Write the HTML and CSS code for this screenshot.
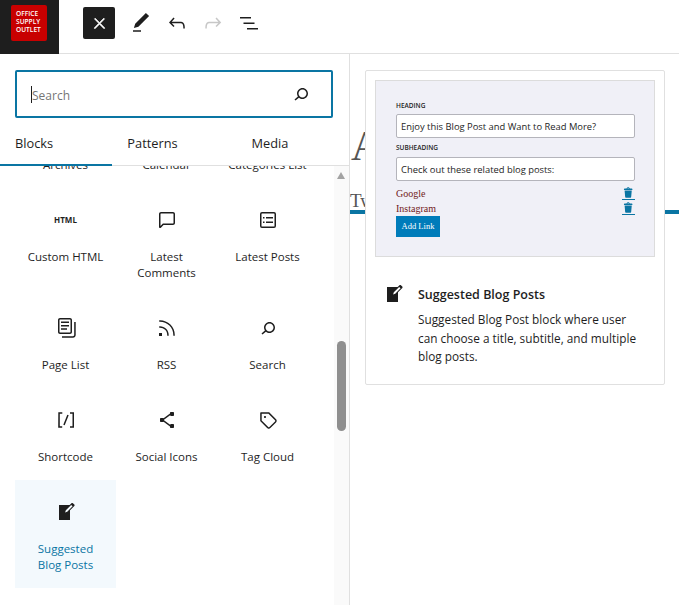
FILE: index.html
```html
<!DOCTYPE html>
<html lang="en">
<head>
    <meta charset="UTF-8">
    <title>Add block</title>
    <meta name="viewport" content="width=device-width, initial-scale=1.0">
    <link rel="stylesheet" href="styles.css">
</head>
<body>
    <div class="topbar">
        <div class="logo"><div class="logo-mark">OFFICE<br>SUPPLY<br>OUTLET</div></div>
        <div class="tools">
            <button class="tool close"><svg viewBox="0 0 24 24" width="24" height="24"><path d="M13 11.8l6.1-6.3-1-1-6.1 6.2-6.1-6.2-1 1 6.1 6.3-6.5 6.7 1 1 6.5-6.6 6.5 6.6 1-1z"/></svg></button>
            <button class="tool"><svg viewBox="0 0 24 24" width="24" height="24"><path d="M20.1 5.1L16.9 2 6.2 12.7l-1.3 4.4 4.5-1.3L20.1 5.1zM4 20.8h8v-1.5H4v1.5z"/></svg></button>
            <button class="tool"><svg viewBox="0 0 24 24" width="24" height="24"><path d="M18.3 11.7c-.6-.6-1.4-.9-2.3-.9H6.7l2.9-3.3-1.1-1-4.5 5L8.5 16l1-1-2.7-2.7H16c.5 0 .9.2 1.3.5 1 1 1 3.4 1 4.5v.3h1.5v-.2c0-1.5 0-4.3-1.5-5.7z"/></svg></button>
            <button class="tool off"><svg viewBox="0 0 24 24" width="24" height="24"><path d="M15.6 6.5l-1.1 1 2.9 3.3H8c-.9 0-1.7.3-2.3.9-1.4 1.5-1.4 4.2-1.4 5.6v.2h1.5v-.3c0-1.1 0-3.5 1-4.5.3-.3.7-.5 1.3-.5h9.2L14.5 15l1.1 1.1 4.6-4.6-4.6-5z"/></svg></button>
            <button class="tool"><svg viewBox="0 0 24 24" width="24" height="24"><path d="M3 6h11v1.5H3V6zm3.5 5.5h11V13h-11v-1.5zM21 17H10v1.5h11V17z"/></svg></button>
        </div>
    </div>

    <div class="main">
        <div class="inserter">
            <div class="search">
                <span class="caret"></span><span class="search-text">Search</span>
                <svg viewBox="0 0 24 24" width="24" height="24"><path d="M13.5 6C10.5 6 8 8.5 8 11.5c0 1.1.3 2.1.9 3l-3.4 3 1 1.1 3.4-2.9c1 .9 2.2 1.4 3.6 1.4 3 0 5.5-2.5 5.5-5.5C19 8.5 16.5 6 13.5 6zm0 9.5c-2.2 0-4-1.8-4-4s1.8-4 4-4 4 1.8 4 4-1.8 4-4 4z"/></svg>
            </div>
            <div class="tabs">
                <div class="tab active">Blocks</div>
                <div class="tab">Patterns</div>
                <div class="tab">Media</div>
            </div>
            <div class="scroller">
                <div class="blocks">
                    <div class="block"><div class="block-icon"></div><div class="block-name">Archives</div></div>
                    <div class="block"><div class="block-icon"></div><div class="block-name">Calendar</div></div>
                    <div class="block"><div class="block-icon"></div><div class="block-name">Categories List</div></div>

                    <div class="block"><div class="block-icon"><span class="html-icon">HTML</span></div><div class="block-name">Custom HTML</div></div>
                    <div class="block"><div class="block-icon"><svg viewBox="0 0 24 24" width="24" height="24"><path d="M18 4H6c-1.1 0-2 .9-2 2v12.9c0 .6.5 1.1 1.1 1.1.3 0 .5-.1.8-.3L8.5 17H18c1.1 0 2-.9 2-2V6c0-1.1-.9-2-2-2zm.5 11c0 .3-.2.5-.5.5H7.9l-2.4 2.4V6c0-.3.2-.5.5-.5h12c.3 0 .5.2.5.5v9z"/></svg></div><div class="block-name">Latest Comments</div></div>
                    <div class="block"><div class="block-icon"><svg viewBox="0 0 24 24" width="24" height="24"><path d="M18 5.5H6a.5.5 0 00-.5.5v12a.5.5 0 00.5.5h12a.5.5 0 00.5-.5V6a.5.5 0 00-.5-.5zM6 4h12a2 2 0 012 2v12a2 2 0 01-2 2H6a2 2 0 01-2-2V6a2 2 0 012-2zm1 5h1.5v1.5H7V9zm1.5 4.5H7V15h1.5v-1.5zM10 9h7v1.5h-7V9zm7 4.5h-7V15h7v-1.5z"/></svg></div><div class="block-name">Latest Posts</div></div>

                    <div class="block"><div class="block-icon"><svg viewBox="0 0 24 24" width="24" height="24"><path d="M7 13.8h6v-1.5H7v1.5zM18 16V4c0-1.1-.9-2-2-2H6c-1.1 0-2 .9-2 2v12c0 1.1.9 2 2 2h10c1.1 0 2-.9 2-2zM5.5 16V4c0-.3.2-.5.5-.5h10c.3 0 .5.2.5.5v12c0 .3-.2.5-.5.5H6c-.3 0-.5-.2-.5-.5zM7 10.5h8V9H7v1.5zm0-3.5h8V5.5H7V7zM20.2 6v13c0 .7-.6 1.2-1.2 1.2H8v1.5h11c1.5 0 2.7-1.2 2.7-2.8V6h-1.5z"/></svg></div><div class="block-name">Page List</div></div>
                    <div class="block"><div class="block-icon"><svg viewBox="0 0 24 24" width="24" height="24"><path d="M5 10.2h-.8v1.5H5c1.9 0 3.8.8 5.1 2.1 1.4 1.4 2.1 3.2 2.1 5.1v.8h1.5V19c0-2.3-.9-4.5-2.6-6.2-1.6-1.6-3.8-2.6-6.1-2.6zm10.4-1.6C12.6 5.8 8.9 4.2 5 4.2h-.8v1.5H5c3.5 0 6.9 1.4 9.4 3.9s3.9 5.8 3.9 9.4v.8h1.5V19c0-3.9-1.6-7.6-4.4-10.4zM4 20h3v-3H4v3z"/></svg></div><div class="block-name">RSS</div></div>
                    <div class="block"><div class="block-icon"><svg viewBox="0 0 24 24" width="24" height="24"><path d="M13.5 6C10.5 6 8 8.5 8 11.5c0 1.1.3 2.1.9 3l-3.4 3 1 1.1 3.4-2.9c1 .9 2.2 1.4 3.6 1.4 3 0 5.5-2.5 5.5-5.5C19 8.5 16.5 6 13.5 6zm0 9.5c-2.2 0-4-1.8-4-4s1.8-4 4-4 4 1.8 4 4-1.8 4-4 4z"/></svg></div><div class="block-name">Search</div></div>

                    <div class="block"><div class="block-icon"><svg viewBox="0 0 24 24" width="24" height="24"><path d="M16 4.2v1.5h2.5v12.5H16v1.5h4V4.2h-4zM4.2 19.8h4v-1.5H5.8V5.8h2.5V4.2h-4l-.1 15.6zm5.1-3.1l1.4.6 4-10-1.4-.6-4 10z"/></svg></div><div class="block-name">Shortcode</div></div>
                    <div class="block"><div class="block-icon"><svg viewBox="0 0 24 24" width="24" height="24"><path d="M9 11.8l6.1-4.5c.1.4.4.7.9.7h2c.6 0 1-.4 1-1V5c0-.6-.4-1-1-1h-2c-.6 0-1 .4-1 1v.4l-6.4 4.8c-.2-.1-.4-.2-.6-.2H6c-.6 0-1 .4-1 1v2c0 .6.4 1 1 1h2c.2 0 .4-.1.6-.2l6.4 4.8v.4c0 .6.4 1 1 1h2c.6 0 1-.4 1-1v-2c0-.6-.4-1-1-1h-2c-.5 0-.8.3-.9.7L9 12.2v-.4z"/></svg></div><div class="block-name">Social Icons</div></div>
                    <div class="block"><div class="block-icon"><svg viewBox="0 0 24 24" width="24" height="24"><path d="M20.1 11.2l-6.7-6.7c-.1-.1-.3-.2-.5-.2H5c-.4-.1-.8.3-.8.7v7.8c0 .2.1.4.2.5l6.7 6.7c.2.2.5.4.7.5s.6.2.9.2c.3 0 .6-.1.9-.2.3-.1.5-.3.8-.5l5.6-5.6c.4-.4.7-1 .7-1.6.1-.6-.2-1.2-.6-1.6zM19 13.4L13.4 19c-.1.1-.2.1-.3.2-.2.1-.4.1-.6 0-.1 0-.2-.1-.3-.2l-6.5-6.5V5.8h6.8l6.5 6.5c.2.2.2.4.2.6 0 .1 0 .3-.2.5zM9 8c-.6 0-1 .4-1 1s.4 1 1 1 1-.4 1-1-.4-1-1-1z"/></svg></div><div class="block-name">Tag Cloud</div></div>

                    <div class="block picked"><div class="block-icon"><svg viewBox="0 0 20 20" width="20" height="20"><path d="M16.89 1.2l1.41 1.41c.39.39.39 1.02 0 1.41L14 8.33V18H3V3h10.67l1.8-1.8c.4-.39 1.03-.4 1.42 0zm-5.66 8.48l5.37-5.36-1.42-1.42-5.36 5.37-.71 2.12z"/></svg></div><div class="block-name">Suggested Blog Posts</div></div>
                </div>
                <div class="scrollbar">
                    <span class="arrow-up"></span>
                    <span class="thumb"></span>
                </div>
            </div>
        </div>

        <div class="canvas">
            <div class="page-title">A</div>
            <div class="page-line">Tw</div>

            <div class="preview-card">
                <div class="preview">
                    <div class="field-label">HEADING</div>
                    <div class="field">Enjoy this Blog Post and Want to Read More?</div>
                    <div class="field-label sub">SUBHEADING</div>
                    <div class="field">Check out these related blog posts:</div>
                    <div class="link-row first">
                        <span class="link-name">Google</span>
                        <svg class="trash" viewBox="0 0 20 20" width="13" height="16"><path d="M12 4h3c.6 0 1 .4 1 1v1H3V5c0-.6.5-1 1-1h3c.2-1.1 1.3-2 2.5-2s2.3.9 2.5 2zM8 4h3c-.2-.6-.9-1-1.5-1S8.2 3.4 8 4zM4 7h11l-.9 10.1c0 .5-.5.9-1 .9H5.9c-.5 0-.9-.4-1-.9L4 7z"/></svg>
                    </div>
                    <div class="link-row">
                        <span class="link-name">Instagram</span>
                        <svg class="trash" viewBox="0 0 20 20" width="13" height="16"><path d="M12 4h3c.6 0 1 .4 1 1v1H3V5c0-.6.5-1 1-1h3c.2-1.1 1.3-2 2.5-2s2.3.9 2.5 2zM8 4h3c-.2-.6-.9-1-1.5-1S8.2 3.4 8 4zM4 7h11l-.9 10.1c0 .5-.5.9-1 .9H5.9c-.5 0-.9-.4-1-.9L4 7z"/></svg>
                    </div>
                    <div class="add-link">Add Link</div>
                </div>
                <div class="preview-info">
                    <svg viewBox="0 0 20 20" width="20" height="20"><path d="M16.89 1.2l1.41 1.41c.39.39.39 1.02 0 1.41L14 8.33V18H3V3h10.67l1.8-1.8c.4-.39 1.03-.4 1.42 0zm-5.66 8.48l5.37-5.36-1.42-1.42-5.36 5.37-.71 2.12z"/></svg>
                    <div>
                        <div class="info-title">Suggested Blog Posts</div>
                        <div class="info-text">Suggested Blog Post block where user can choose a title, subtitle, and multiple blog posts.</div>
                    </div>
                </div>
            </div>
        </div>
    </div>
</body>
</html>
```

FILE: styles.css
```css
body {
    font-family: 'Open Sans', 'Noto Sans', sans-serif;
    color: #1e1e1e;
    background: #fff;
    margin: 0;
    height: 605px;
    overflow: hidden;
}
svg {
    display: block;
    fill: #1e1e1e;
}
.topbar {
    display: flex;
    height: 53px;
    border-bottom: 1px solid #e0e0e0;
}
.logo {
    width: 59px;
    height: 54px;
    background: #1e1e1e;
    box-sizing: border-box;
    padding: 5px 0 0 11px;
}
.logo-mark {
    width: 36px;
    height: 36px;
    box-sizing: border-box;
    padding: 5px 0 0 5px;
    background: #c80000;
    border-radius: 2px;
    color: #fff;
    font-size: 6.6px;
    font-weight: 600;
    line-height: 8px;
}
.tools {
    display: flex;
    align-items: flex-start;
    padding: 7px 0 0 24px;
    gap: 4px;
}
.tool {
    width: 32px;
    height: 32px;
    padding: 0;
    border: none;
    border-radius: 2px;
    background: none;
    display: flex;
    align-items: center;
    justify-content: center;
}
.close {
    background: #1e1e1e;
    margin-right: 6px;
}
.close svg {
    fill: #fff;
    stroke: #fff;
    stroke-width: 1;
    width: 17px;
    height: 17px;
}
.off svg {
    fill: #c7c7c7;
}
.main {
    display: flex;
    height: 551px;
}
.inserter {
    width: 349px;
    border-right: 1px solid #e0e0e0;
    display: flex;
    flex-direction: column;
}
.search {
    height: 48px;
    box-sizing: border-box;
    margin: 16px 16px 0 15px;
    border: 2px solid #0a75a3;
    border-radius: 2px;
    display: flex;
    align-items: center;
    padding: 0 18px 0 14px;
}
.caret {
    width: 1px;
    height: 17px;
    background: #1e1e1e;
}
.search-text {
    flex: 1;
    font-size: 12px;
    line-height: 20px;
    padding-top: 4px;
    color: #757575;
}
.tabs {
    display: flex;
    height: 48px;
    box-sizing: border-box;
    border-bottom: 1px solid #e0e0e0;
}
.tab {
    width: 81px;
    font-size: 12.8px;
    font-weight: 500;
    line-height: 50px;
    text-align: center;
}
.tab:nth-child(3) {
    width: 154px;
}
.tab.active {
    width: 112px;
    height: 48px;
    box-sizing: border-box;
    border-bottom: 2px solid #0a75a3;
    text-align: left;
    padding-left: 15px;
}
.scroller {
    flex: 1;
    display: flex;
    overflow: hidden;
}
.blocks {
    flex: 1;
    display: grid;
    grid-template-columns: repeat(3, 101px);
    grid-auto-rows: min-content;
    align-content: start;
    padding-left: 15px;
    margin-top: -70px;
}
.block {
    height: 92px;
    text-align: center;
}
.block:nth-child(5) {
    height: 108px;
}
.block.picked {
    height: 108px;
    background: #f3f9fd;
    color: #0a75a3;
}
.block.picked .block-icon {
    padding-top: 22px;
    height: 22px;
}
.block.picked .block-name {
    padding: 0 16px;
}
.block-icon {
    height: 24px;
    padding-top: 20px;
    display: flex;
    justify-content: center;
}
.block-name {
    margin-top: 17px;
    padding: 0 8px;
    font-size: 11.5px;
    line-height: 16px;
}
.html-icon {
    font-size: 8px;
    font-weight: 700;
    line-height: 24px;
}
.scrollbar {
    width: 15px;
    background: #fafafa;
    position: relative;
}
.arrow-up {
    position: absolute;
    left: 3px;
    top: 6px;
    border-left: 4.5px solid transparent;
    border-right: 4.5px solid transparent;
    border-bottom: 7px solid #a3a3a3;
}
.thumb {
    position: absolute;
    left: 3px;
    top: 175px;
    width: 9px;
    height: 90px;
    border-radius: 5px;
    background: #8f8f8f;
}
.canvas {
    flex: 1;
    position: relative;
    overflow: hidden;
    font-family: 'Liberation Serif', serif;
    color: #555;
}
.page-title {
    font-size: 42px;
    line-height: 48px;
    margin-top: 68px;
    padding-left: 1px;
}
.page-line {
    font-size: 19px;
    line-height: 22px;
    margin-top: 20px;
    height: 24px;
    box-sizing: border-box;
    border-bottom: 4px solid #0a75a3;
    width: 329px;
}
.preview-card {
    position: absolute;
    left: 15px;
    top: 16px;
    width: 300px;
    height: 315px;
    box-sizing: border-box;
    padding: 9px;
    background: #fff;
    border: 1px solid #e0e0e0;
    border-radius: 2px;
    font-family: 'Open Sans', 'Noto Sans', sans-serif;
    color: #1e1e1e;
}
.preview {
    height: 177px;
    box-sizing: border-box;
    padding: 20px 19px 0 20px;
    background: #f0f0f7;
    border: 1px solid #dcdcdc;
}
.field-label {
    font-size: 6.5px;
    font-weight: 600;
    line-height: 10px;
    margin-bottom: 3px;
}
.field-label.sub {
    margin-top: 5px;
    margin-bottom: 4px;
}
.field {
    height: 24px;
    box-sizing: border-box;
    background: #fff;
    border: 1px solid #b4b4bb;
    border-radius: 2px;
    padding-left: 4px;
    font-size: 9.4px;
    line-height: 24px;
}
.link-row {
    display: flex;
    justify-content: space-between;
    height: 15px;
    font-family: 'Liberation Serif', serif;
    font-size: 10px;
    line-height: 15px;
    color: #701a1a;
}
.link-row.first {
    margin-top: 5px;
}
.trash {
    fill: #0a75a3;
    border-bottom: 1px solid #0a75a3;
    height: 13px;
}
.add-link {
    width: 44px;
    height: 21px;
    background: #007cba;
    color: #fff;
    font-family: 'Liberation Serif', serif;
    font-size: 8.5px;
    line-height: 21px;
    text-align: center;
}
.preview-info {
    display: flex;
    gap: 14px;
    padding: 27px 8px 0 9px;
}
.preview-info svg {
    flex: none;
}
.info-title {
    font-size: 12.5px;
    font-weight: 600;
    line-height: 22px;
}
.info-text {
    margin-top: 4px;
    font-size: 11.8px;
    line-height: 18.5px;
}
```
